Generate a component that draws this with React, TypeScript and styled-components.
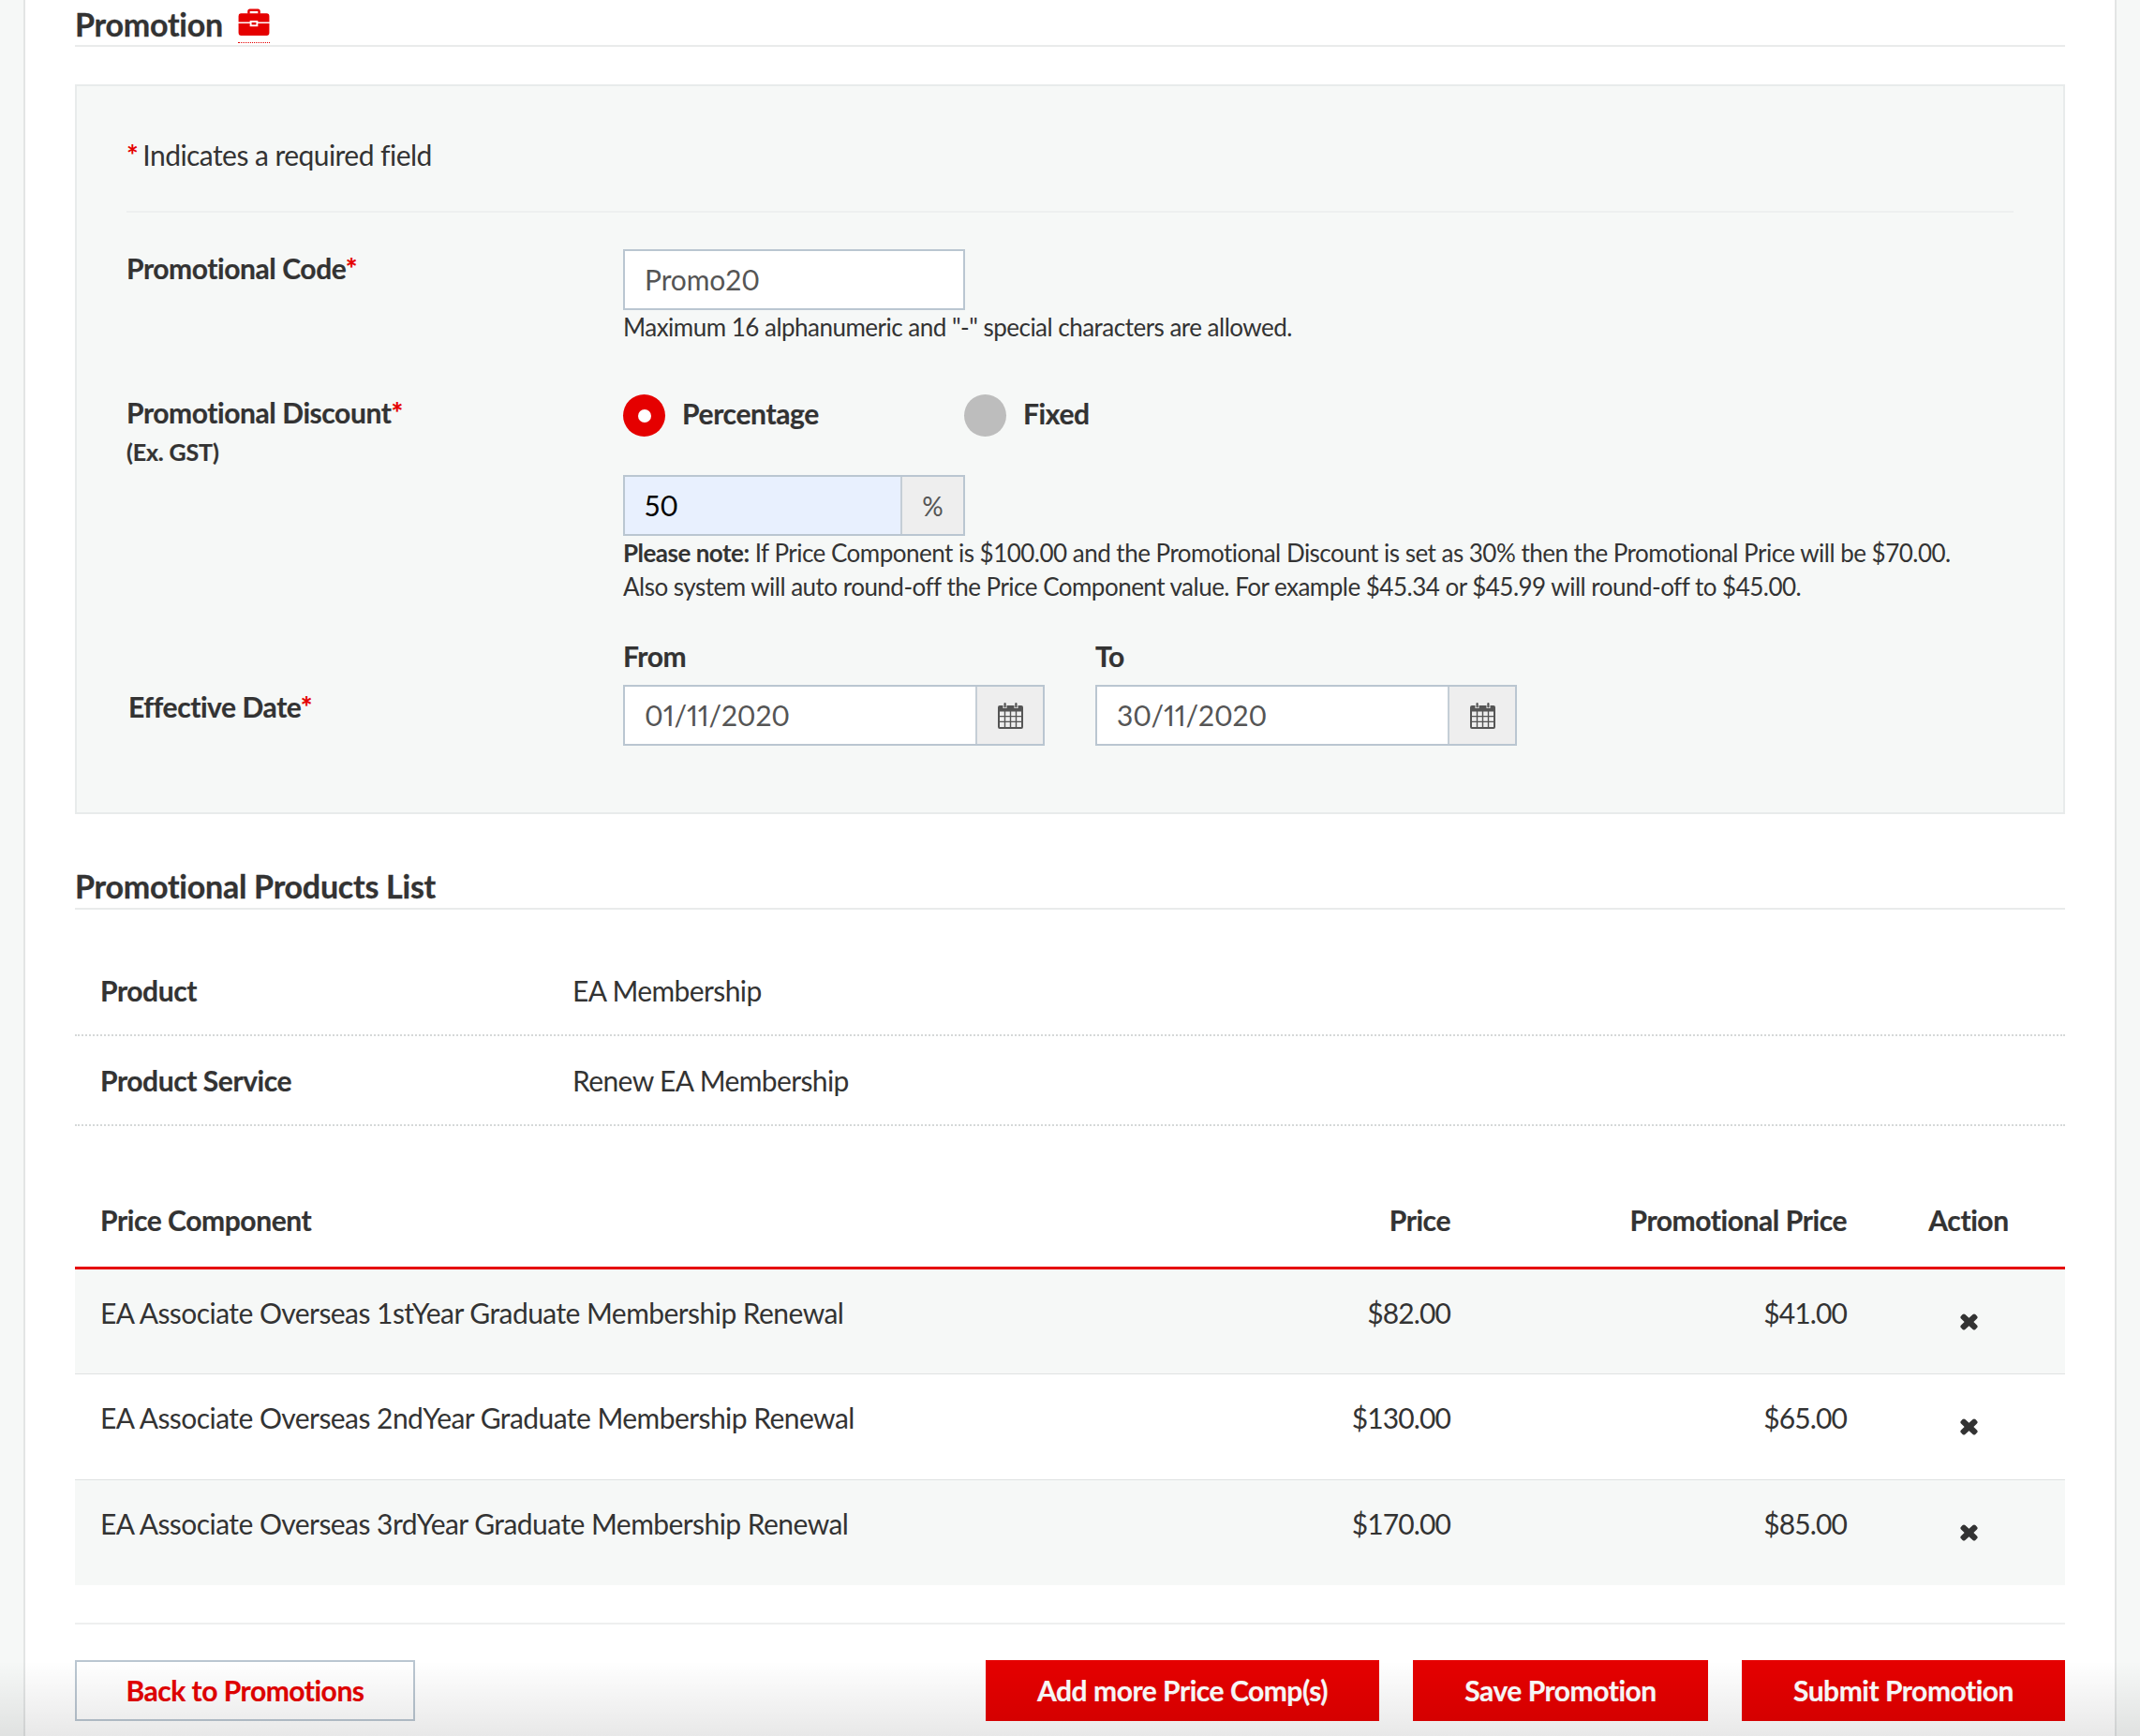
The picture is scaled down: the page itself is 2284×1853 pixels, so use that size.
import React from 'react';
import styled, { createGlobalStyle } from 'styled-components';

const Global = createGlobalStyle`
  html, body { margin: 0; padding: 0; background: #f6f8f7; }
  * { box-sizing: border-box; }
  body { font-family: Lato, "Liberation Sans", sans-serif; color: #333; }
`;

const Page = styled.div`
  position: relative;
  width: 2284px;
  height: 1853px;
  overflow: hidden;
  background: #f6f8f7;
`;
const Sheet = styled.main`
  width: 2234px;
  height: 1853px;
  margin-left: 25px;
  padding: 0 53px 0 53px;
  background: #fff;
  border-left: 2px solid #e3e5e5;
  border-right: 2px solid #e3e5e5;
`;
const BottomShade = styled.div`
  position: absolute;
  left: 0;
  right: 0;
  bottom: 0;
  height: 80px;
  pointer-events: none;
  background: linear-gradient(to bottom, rgba(0,0,0,0), rgba(0,0,0,.09));
`;
const SectionHead = styled.div<{ $h: number; $mb: number }>`
  height: ${p => p.$h}px;
  margin-bottom: ${p => p.$mb}px;
  display: flex;
  align-items: flex-start;
  gap: 16px;
  border-bottom: 2px solid #e9ebeb;
`;
const SectionTitle = styled.h2<{ $top: number }>`
  margin: ${p => p.$top}px 0 0;
  font-size: 34px;
  line-height: 40px;
  font-weight: 700;
  letter-spacing: -0.25px;
  -webkit-text-stroke: 0.3px currentColor;
`;
const IconTag = styled.span`
  display: block;
  margin-top: 9px;
  width: 34px;
  height: 37px;
  border-bottom: 1px dotted #e50000;
  line-height: 0;
`;
const FormPanel = styled.section`
  height: 779px;
  padding: 0 53px;
  background: #f6f8f7;
  border: 2px solid #e8ebeb;
`;
const Required = styled.div`
  height: 135px;
  padding-top: 55px;
  font-size: 30px;
  line-height: 36px;
  letter-spacing: -0.55px;
  border-bottom: 2px solid #eef0f0;
  color: #333;
`;
const Star = styled.span`
  color: #e50000;
  font-weight: 700;
`;
const LeadStar = styled(Star)`
  margin-right: -2px;
`;
const FormRow = styled.div<{ $h: number }>`
  display: grid;
  grid-template-columns: 530px 1fr;
  height: ${p => p.$h}px;
`;
const Label = styled.div<{ $top: number; $left?: number }>`
  margin-top: ${p => p.$top}px;
  margin-left: ${p => p.$left ?? 0}px;
  font-size: 30px;
  line-height: 36px;
  font-weight: 700;
  letter-spacing: -0.42px;
  -webkit-text-stroke: 0.2px currentColor;
`;
const SubLabel = styled.div`
  margin-top: 9px;
  font-size: 25px;
  line-height: 30px;
  font-weight: 700;
  letter-spacing: -0.15px;
`;
const Field = styled.div<{ $top: number }>`
  display: flex;
  flex-direction: column;
  align-items: flex-start;
  padding-top: ${p => p.$top}px;
`;
const InputBox = styled.div<{ $w: number; $tint?: boolean }>`
  display: flex;
  width: ${p => p.$w}px;
  height: 65px;
  border: 2px solid #bac6d1;
  background: ${p => (p.$tint ? '#e8f0fe' : '#fff')};
`;
const InputText = styled.div<{ $dark?: boolean }>`
  flex: 1;
  padding-left: 21px;
  font-size: 30px;
  line-height: 61px;
  letter-spacing: -0.1px;
  font-variant-numeric: proportional-nums;
  color: ${p => (p.$dark ? '#000' : '#555')};
`;
const Addon = styled.div<{ $w: number }>`
  display: flex;
  align-items: center;
  justify-content: center;
  width: ${p => p.$w}px;
  border-left: 2px solid #c5ced6;
  background: #eee;
  color: #555;
  font-size: 28px;
`;
const Hint = styled.div`
  font-size: 26px;
  line-height: 36px;
  letter-spacing: -0.51px;
  white-space: nowrap;
  color: #333;
`;
const Radios = styled.div`
  display: flex;
  margin-bottom: 41px;
`;
const RadioItem = styled.div<{ $w: number }>`
  display: flex;
  align-items: center;
  gap: 18px;
  width: ${p => p.$w}px;
  height: 45px;
  font-size: 30px;
  font-weight: 700;
  letter-spacing: -0.36px;
  -webkit-text-stroke: 0.2px currentColor;
`;
const RadioText = styled.span`
  margin-top: -6px;
`;
const RadioDot = styled.span<{ $on?: boolean }>`
  width: 45px;
  height: 45px;
  flex: none;
  border-radius: 50%;
  display: flex;
  align-items: center;
  justify-content: center;
  background: ${p => (p.$on ? '#e50000' : '#bdbdbd')};
  &::after {
    content: '';
    display: ${p => (p.$on ? 'block' : 'none')};
    width: 14px;
    height: 14px;
    border-radius: 50%;
    background: #fff;
  }
`;
const Dates = styled.div`
  display: flex;
  gap: 54px;
`;
const DateLabel = styled.div`
  font-size: 30px;
  line-height: 36px;
  font-weight: 700;
  letter-spacing: -0.42px;
  -webkit-text-stroke: 0.2px currentColor;
  margin-bottom: 13px;
`;
const SpecRow = styled.div`
  display: grid;
  grid-template-columns: 504px 1fr;
  height: 96px;
  padding-left: 27px;
  padding-bottom: 1px;
  align-items: center;
  font-size: 30px;
  letter-spacing: -0.6px;
  border-bottom: 2px dotted #d5d8d8;
`;
const SpecKey = styled.div`
  font-weight: 700;
  letter-spacing: -0.42px;
  -webkit-text-stroke: 0.2px currentColor;
`;
const PriceGrid = styled.div<{ $h: number; $tint?: boolean; $line?: string; $lw?: number }>`
  display: grid;
  grid-template-columns: 1100px 368px 423px 1fr;
  height: ${p => p.$h}px;
  background: ${p => (p.$tint ? '#f6f8f7' : 'transparent')};
  border-bottom: ${p => (p.$line ? `${p.$lw ?? 1}px solid ${p.$line}` : 'none')};
  font-size: 30px;
  line-height: 36px;
  letter-spacing: -0.55px;
`;
const HeadCell = styled.div<{ $align?: string }>`
  padding-top: 82px;
  padding-left: ${p => (p.$align === 'left' || !p.$align ? 27 : 0)}px;
  text-align: ${p => p.$align ?? 'left'};
  font-weight: 700;
  letter-spacing: -0.42px;
  -webkit-text-stroke: 0.2px currentColor;
`;
const ActionHead = styled(HeadCell)`
  padding-left: 27px;
  text-align: center;
`;
const Cell = styled.div`
  padding: 28px 0 0 27px;
  white-space: nowrap;
`;
const PriceCell = styled.div`
  padding-top: 28px;
  text-align: right;
  letter-spacing: -0.9px;
`;
const ActionCell = styled.div`
  padding: 47px 0 0 27px;
  display: flex;
  justify-content: center;
  align-items: flex-start;
`;
const Actions = styled.div`
  display: flex;
  justify-content: space-between;
  margin-top: 40px;
  padding-top: 38px;
  border-top: 2px solid #eeefef;
`;
const ActionRight = styled.div`
  display: flex;
  gap: 36px;
`;
const Btn = styled.button<{ $w: number; $ghost?: boolean }>`
  width: ${p => p.$w}px;
  height: 65px;
  padding: 0 0 2px;
  font-family: inherit;
  font-size: 30px;
  font-weight: 700;
  letter-spacing: -0.47px;
  -webkit-text-stroke: 0.2px currentColor;
  color: ${p => (p.$ghost ? '#e50000' : '#fff')};
  background: ${p => (p.$ghost ? 'transparent' : '#e50000')};
  border: ${p => (p.$ghost ? '2px solid #bac6d1' : 'none')};
`;

const Briefcase = () => (
  <svg width="34" height="29" viewBox="0 0 34 30" fill="#e50000">
    <path d="M10 6V3C10 1.500 11 .500 12.500 .500h9C23 .500 24 1.500 24 3v3h-2.500V3h-9v3z" />
    <path d="M3 5.500h28a3 3 0 0 1 3 3V15H21.500v-1.500h-9V15H0V8.500a3 3 0 0 1 3-3z" />
    <path d="M0 16.500h12.500V20h9v-3.500H34V27a3 3 0 0 1-3 3H3a3 3 0 0 1-3-3z" />
    <rect x="14.500" y="15.500" width="5" height="2.500" />
  </svg>
);
const Calendar = () => (
  <svg width="27" height="28" viewBox="0 0 27 28" fill="#555">
    <path fillRule="evenodd" d="M2 3h3.500v3h4V3h8v3h4V3H25a2 2 0 0 1 2 2v21a2 2 0 0 1-2 2H2a2 2 0 0 1-2-2V5a2 2 0 0 1 2-2zM2 9.500V14h4.800V9.500zm6.200 0V14h4.600V9.500zm6 0V14h4.600V9.500zm6 0V14H25V9.500zM2 15.300v4.400h4.800v-4.400zm6.200 0v4.400h4.600v-4.400zm6 0v4.400h4.600v-4.400zm6 0v4.400H25v-4.400zM2 21v5h4.800v-5zm6.200 0v5h4.600v-5zm6 0v5h4.600v-5zm6 0v5H25v-5z" />
    <rect x="6.500" y="0" width="2.200" height="5.500" rx="1.100" />
    <rect x="18.300" y="0" width="2.200" height="5.500" rx="1.100" />
  </svg>
);
const Cross = () => (
  <svg width="19" height="18" viewBox="0 0 19 18" fill="#333">
    <path d="M4 .5a2 2 0 0 0-1.400.6L1 2.700a2 2 0 0 0 0 2.800L4.600 9 1 12.500a2 2 0 0 0 0 2.800l1.600 1.600a2 2 0 0 0 2.800 0l4.100-3.600 4.100 3.600a2 2 0 0 0 2.800 0l1.600-1.600a2 2 0 0 0 0-2.800L14.400 9 18 5.500a2 2 0 0 0 0-2.800l-1.600-1.600a2 2 0 0 0-2.800 0L9.500 4.700 5.400 1.100A2 2 0 0 0 4 .5z" />
  </svg>
);

const rows = [
  ['EA Associate Overseas 1stYear Graduate Membership Renewal', '$82.00', '$41.00'],
  ['EA Associate Overseas 2ndYear Graduate Membership Renewal', '$130.00', '$65.00'],
  ['EA Associate Overseas 3rdYear Graduate Membership Renewal', '$170.00', '$85.00'],
];

export default function App() {
  return (
    <Page>
      <Global />
      <Sheet>
        <SectionHead $h={50} $mb={40}>
          <SectionTitle $top={6}>Promotion</SectionTitle>
          <IconTag><Briefcase /></IconTag>
        </SectionHead>
        <FormPanel>
          <Required><LeadStar>*</LeadStar> Indicates a required field</Required>
          <FormRow $h={154}>
            <Label $top={41}>Promotional Code<Star>*</Star></Label>
            <Field $top={39}>
              <InputBox $w={365}><InputText>Promo20</InputText></InputBox>
              <Hint>Maximum 16 alphanumeric and "-" special characters are allowed.</Hint>
            </Field>
          </FormRow>
          <FormRow $h={280}>
            <div>
              <Label $top={41}>Promotional Discount<Star>*</Star><SubLabel>(Ex. GST)</SubLabel></Label>
            </div>
            <Field $top={40}>
              <Radios>
                <RadioItem $w={364}><RadioDot $on /><RadioText>Percentage</RadioText></RadioItem>
                <RadioItem $w={200}><RadioDot /><RadioText>Fixed</RadioText></RadioItem>
              </Radios>
              <InputBox $w={365} $tint>
                <InputText $dark>50</InputText>
                <Addon $w={67}>%</Addon>
              </InputBox>
              <Hint><b>Please note:</b> If Price Component is $100.00 and the Promotional Discount is set as 30% then the Promotional Price will be $70.00.</Hint>
              <Hint>Also system will auto round-off the Price Component value. For example $45.34 or $45.99 will round-off to $45.00.</Hint>
            </Field>
          </FormRow>
          <FormRow $h={160}>
            <Label $top={75} $left={2}>Effective Date<Star>*</Star></Label>
            <Dates>
              <Field $top={21}>
                <DateLabel>From</DateLabel>
                <InputBox $w={450}>
                  <InputText>01/11/2020</InputText>
                  <Addon $w={72}><Calendar /></Addon>
                </InputBox>
              </Field>
              <Field $top={21}>
                <DateLabel>To</DateLabel>
                <InputBox $w={450}>
                  <InputText>30/11/2020</InputText>
                  <Addon $w={72}><Calendar /></Addon>
                </InputBox>
              </Field>
            </Dates>
          </FormRow>
        </FormPanel>
        <SectionHead $h={102} $mb={39}>
          <SectionTitle $top={57}>Promotional Products List</SectionTitle>
        </SectionHead>
        <SpecRow><SpecKey>Product</SpecKey><div>EA Membership</div></SpecRow>
        <SpecRow><SpecKey>Product Service</SpecKey><div>Renew EA Membership</div></SpecRow>
        <PriceGrid $h={153} $line="#e50000" $lw={3}>
          <HeadCell>Price Component</HeadCell>
          <HeadCell $align="right">Price</HeadCell>
          <HeadCell $align="right">Promotional Price</HeadCell>
          <ActionHead>Action</ActionHead>
        </PriceGrid>
        {rows.map((r, i) => (
          <PriceGrid key={r[0]} $h={i === 1 ? 113 : 112} $tint={i !== 1} $line={i < 2 ? '#dfe2e2' : undefined}>
            <Cell>{r[0]}</Cell>
            <PriceCell>{r[1]}</PriceCell>
            <PriceCell>{r[2]}</PriceCell>
            <ActionCell><Cross /></ActionCell>
          </PriceGrid>
        ))}
        <Actions>
          <Btn $w={363} $ghost>Back to Promotions</Btn>
          <ActionRight>
            <Btn $w={420}>Add more Price Comp(s)</Btn>
            <Btn $w={315}>Save Promotion</Btn>
            <Btn $w={345}>Submit Promotion</Btn>
          </ActionRight>
        </Actions>
      </Sheet>
      <BottomShade />
    </Page>
  );
}
